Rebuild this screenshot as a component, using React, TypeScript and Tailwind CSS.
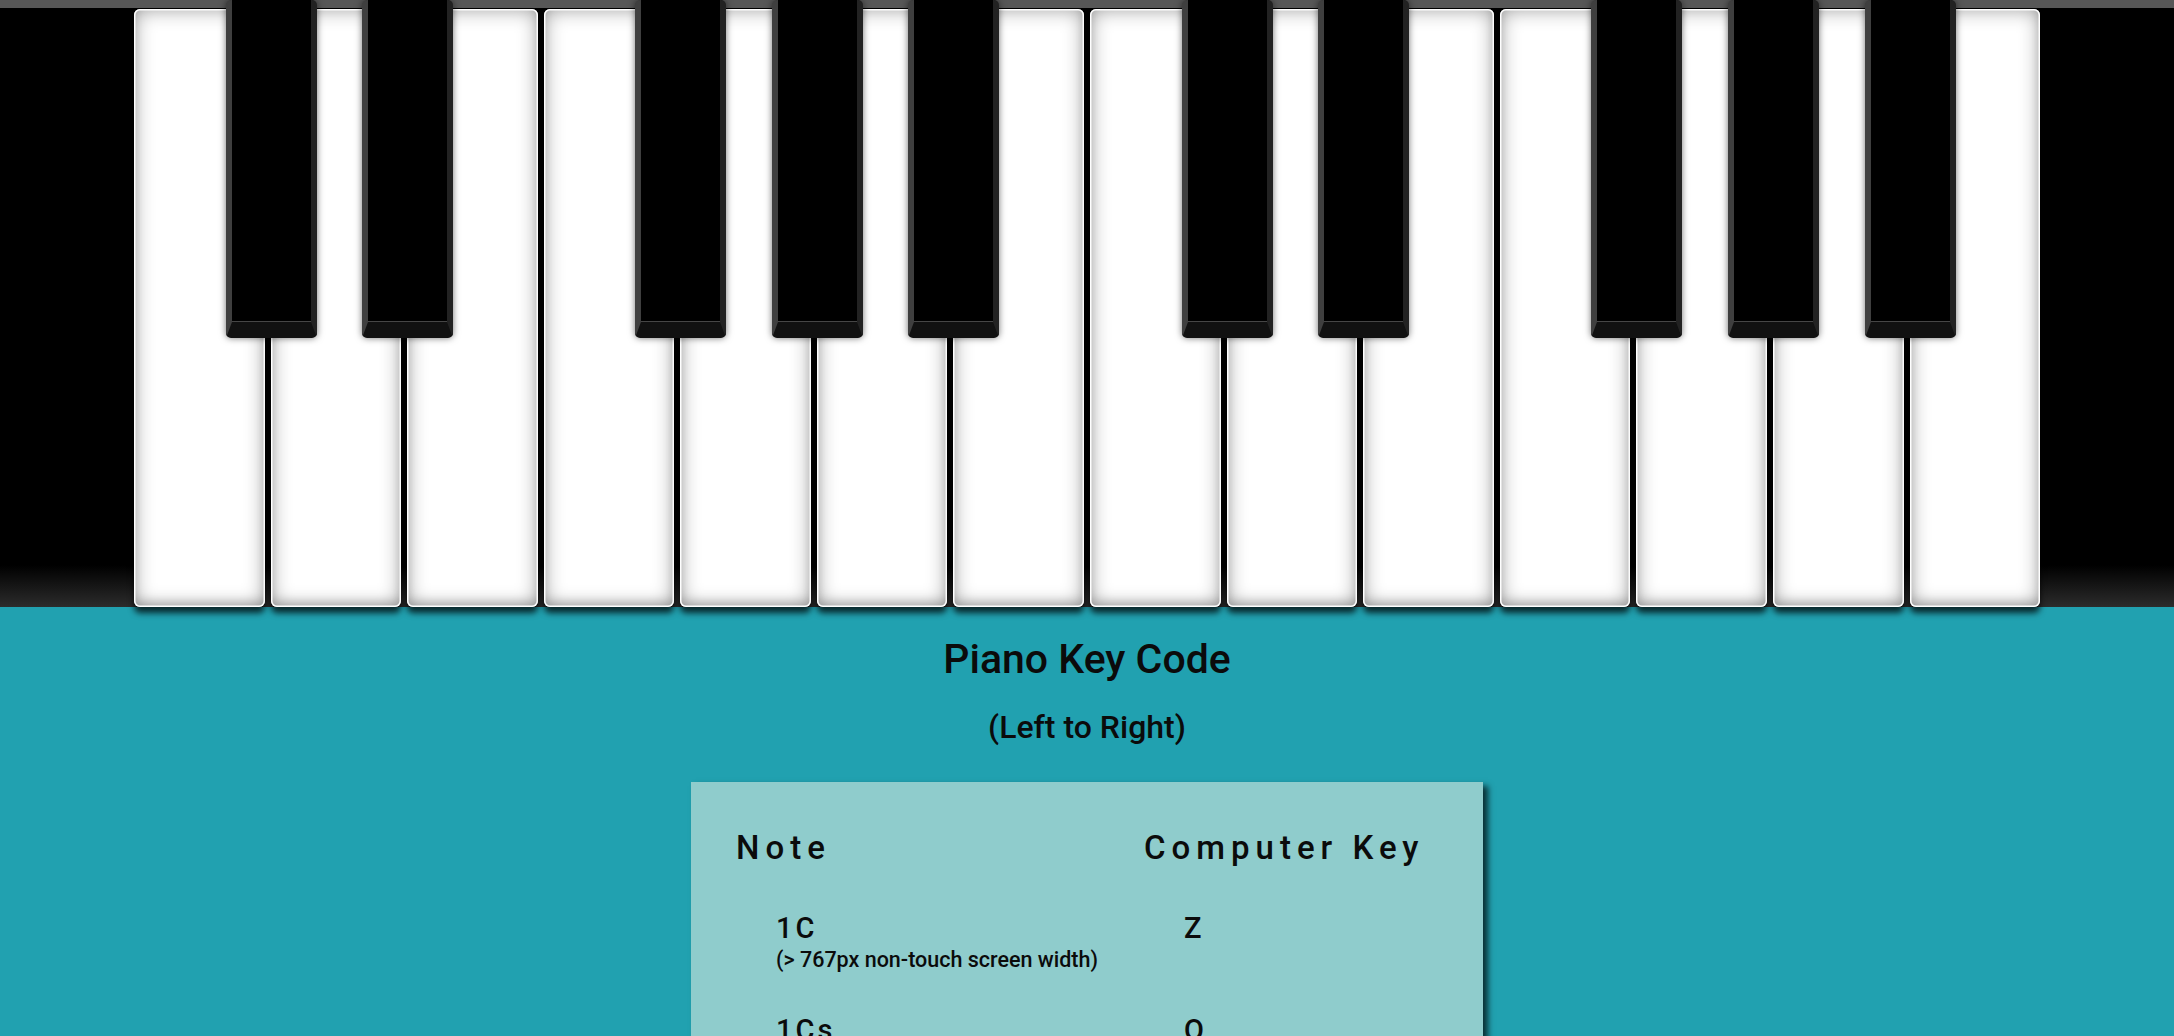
import React from 'react';

type WhiteKey = { note: string; sharp: boolean };

// 2 octaves, C to B; sharp = a black key sits to the right of this white key
const whiteKeys: WhiteKey[] = [
  { note: 'C', sharp: true },
  { note: 'D', sharp: true },
  { note: 'E', sharp: false },
  { note: 'F', sharp: true },
  { note: 'G', sharp: true },
  { note: 'A', sharp: true },
  { note: 'B', sharp: false },
  { note: 'C', sharp: true },
  { note: 'D', sharp: true },
  { note: 'E', sharp: false },
  { note: 'F', sharp: true },
  { note: 'G', sharp: true },
  { note: 'A', sharp: true },
  { note: 'B', sharp: false },
];

const keyCodes: { note: string; key: string; hint?: string }[] = [
  { note: '1C', key: 'Z', hint: '(> 767px non-touch screen width)' },
  { note: '1Cs', key: 'Q' },
  { note: '1D', key: 'X' },
  { note: '1Ds', key: 'S' },
  { note: '1E', key: 'C' },
  { note: '1F', key: 'V' },
  { note: '1Fs', key: 'G' },
  { note: '1G', key: 'B' },
  { note: '1Gs', key: 'H' },
  { note: '1A', key: 'N' },
  { note: '1As', key: 'J' },
  { note: '1B', key: 'M' },
];

const Piano: React.FC = () => (
  <div className="h-[607px] border-t-[8px] border-[#575757] bg-[linear-gradient(to_bottom,#000_0%,#000_93%,#2c2c2c_100%)]">
    <div className="relative mx-auto flex h-[599px] w-[1906px] gap-[6px] pt-px">
      {whiteKeys.map((k, i) => (
        <div
          key={i}
          className="relative flex-1 rounded-[6px] bg-white shadow-[inset_0_0_0_1.5px_#fff,inset_0_0_20px_rgba(0,0,0,0.42),inset_0_-6px_8px_rgba(0,0,0,0.12),0_6px_6px_rgba(0,0,0,0.75)]"
        >
          {k.sharp && (
            <div className="absolute top-[-9px] right-[-52px] z-10 h-[338px] w-[91px] rounded-[5px] border-b-[16px] border-l-[6px] border-r-[6px] border-b-[#111] border-l-[#3f3f3f] border-r-[#222] bg-black shadow-[inset_0_-1px_0_#464646,0_0_7px_rgba(0,0,0,0.55)]" />
          )}
        </div>
      ))}
    </div>
  </div>
);

const App: React.FC = () => {
  return (
    <div className="min-h-screen bg-[#21a1b0] pb-20 font-['Roboto','Liberation_Sans',sans-serif] font-medium text-[#0b0b0b]">
      <Piano />

      <div className="pt-[30px] text-center">
        <h1 className="text-[41px] leading-[44px]">Piano Key Code</h1>
        <p className="mt-[28px] text-[32px] leading-[36px]">(Left to Right)</p>
      </div>

      <div className="mx-auto mt-[37px] w-[792px] bg-[#8fcccc] pb-10 pl-[45px] pt-[48px] shadow-[5px_4px_6px_rgba(0,0,0,0.7)]">
        <div className="grid grid-cols-[408px_1fr] text-[33px] leading-[36px] tracking-[6px]">
          <div>Note</div>
          <div>Computer Key</div>
        </div>
        <div className="mt-[4px]">
          {keyCodes.map((r) => (
            <div key={r.note} className="grid grid-cols-[408px_1fr] pt-[42px]">
              <div className="pl-[40px]">
                <div className="text-[29px] leading-[32px] tracking-[3px]">{r.note}</div>
                {r.hint && <div className="mt-[4px] text-[21.5px] leading-[24px]">{r.hint}</div>}
              </div>
              <div className="pl-[40px] text-[29px] leading-[32px] tracking-[3px]">{r.key}</div>
            </div>
          ))}
        </div>
      </div>
    </div>
  );
};

export default App;
